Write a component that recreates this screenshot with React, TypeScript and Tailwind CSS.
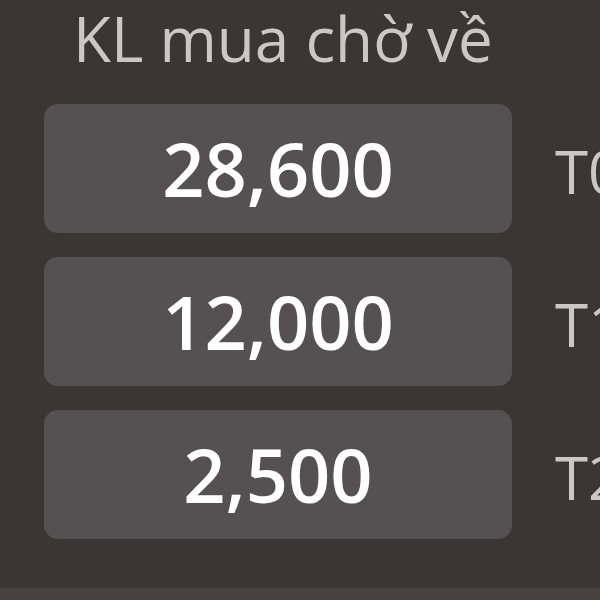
import React from 'react';

interface PendingRow {
  qty: string;
  label: string;
}

const rows: PendingRow[] = [
  { qty: '28,600', label: 'T0' },
  { qty: '12,000', label: 'T1' },
  { qty: '2,500', label: 'T2' },
];

export default function App() {
  return (
    <div
      className="w-[600px] h-[600px] overflow-hidden bg-[#3c3535] flex flex-col"
      style={{ fontFamily: '"Open Sans", "Noto Sans", sans-serif' }}
    >
      <div className="flex-1 pl-[44px]">
        <div className="mt-[4px] ml-[29px] text-[62px] leading-[1.1] text-[#cbc7c7] whitespace-nowrap">
          KL mua chờ về
        </div>

        <div className="mt-[32px] flex flex-col gap-[24px]">
          {rows.map((row) => (
            <div key={row.label} className="flex items-center">
              <div className="w-[468px] h-[129px] shrink-0 rounded-[14px] bg-[#555051] flex items-center justify-center">
                <span className="text-[74px] leading-none font-semibold text-white">
                  {row.qty}
                </span>
              </div>
              <span className="ml-[43px] mt-[4px] text-[60px] leading-none text-[#cbc7c7] whitespace-nowrap">
                {row.label}
              </span>
            </div>
          ))}
        </div>
      </div>

      {/* lighter strip at the bottom edge */}
      <div className="h-[12px] shrink-0 bg-[#484141]" />
    </div>
  );
}
